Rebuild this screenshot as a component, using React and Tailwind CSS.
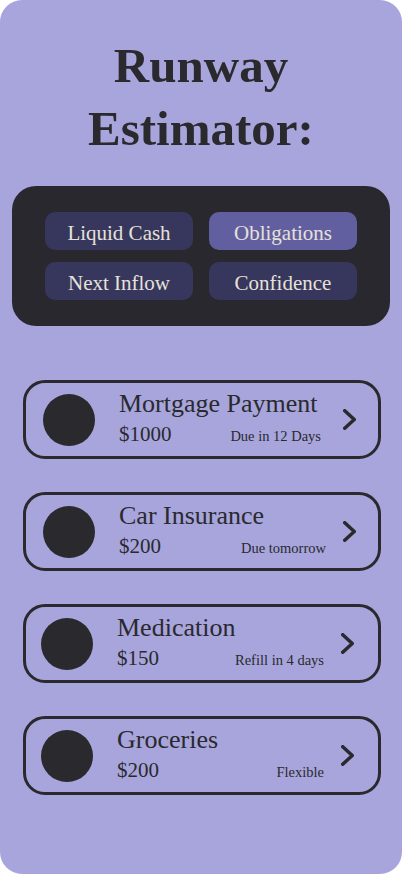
const TABS = [
  { label: 'Liquid Cash', active: false },
  { label: 'Obligations', active: true },
  { label: 'Next Inflow', active: false },
  { label: 'Confidence', active: false },
]

const BILLS = [
  { name: 'Mortgage Payment', amount: '$1000', note: 'Due in 12 Days', pad: 'pl-[17px]', noteInset: 'mr-[5px]' },
  { name: 'Car Insurance', amount: '$200', note: 'Due tomorrow', pad: 'pl-[17px]', noteInset: '' },
  { name: 'Medication', amount: '$150', note: 'Refill in 4 days', pad: 'pl-[15px]', noteInset: '' },
  { name: 'Groceries', amount: '$200', note: 'Flexible', pad: 'pl-[15px]', noteInset: '' },
]

function Chevron() {
  return (
    <svg width="13" height="21" viewBox="0 0 13 21" fill="none" className="shrink-0">
      <polyline
        points="1.75,1.75 11.25,10.5 1.75,19.25"
        stroke="#2a292e"
        strokeWidth="3.5"
        strokeLinecap="round"
        strokeLinejoin="round"
      />
    </svg>
  )
}

function BillCard({ bill }) {
  return (
    <div
      className={`flex h-[79px] w-[358px] items-center rounded-[22px] border-[3px] border-[#2a292e] ${bill.pad}`}
    >
      <div className="h-[52px] w-[52px] shrink-0 rounded-full bg-[#2a292e]" />
      <div className="ml-6 flex w-[207px] flex-col">
        <div className="text-[26px] leading-[28px] whitespace-nowrap">{bill.name}</div>
        <div className="flex items-baseline justify-between">
          <span className="text-[21px] leading-[32px]">{bill.amount}</span>
          <span className={`text-[14.5px] whitespace-nowrap ${bill.noteInset}`}>{bill.note}</span>
        </div>
      </div>
      <div className="ml-[17px]">
        <Chevron />
      </div>
    </div>
  )
}

export default function App() {
  return (
    <div className="h-[874px] w-[402px] overflow-hidden rounded-[22px] bg-[#a7a5dc] font-['Liberation_Serif',serif] text-[#2a292e]">
      <h1 className="pt-[34px] text-center text-[49px] font-bold leading-[63px]">
        Runway
        <br />
        Estimator:
      </h1>

      <div className="ml-[12px] mt-[26px] w-[378px] rounded-[24px] bg-[#29282e] px-[33px] py-[26px]">
        <div className="grid grid-cols-[148px_148px] gap-x-4 gap-y-3">
          {TABS.map((t) => (
            <button
              key={t.label}
              className={`h-[38px] rounded-[10px] pt-[4px] text-[21px] leading-[34px] text-[#e6e1d8] ${
                t.active ? 'bg-[#625fa1]' : 'bg-[#37365c]'
              }`}
            >
              {t.label}
            </button>
          ))}
        </div>
      </div>

      <div className="ml-[23px] mt-[54px] flex flex-col gap-[33px]">
        {BILLS.map((b) => (
          <BillCard key={b.name} bill={b} />
        ))}
      </div>
    </div>
  )
}
